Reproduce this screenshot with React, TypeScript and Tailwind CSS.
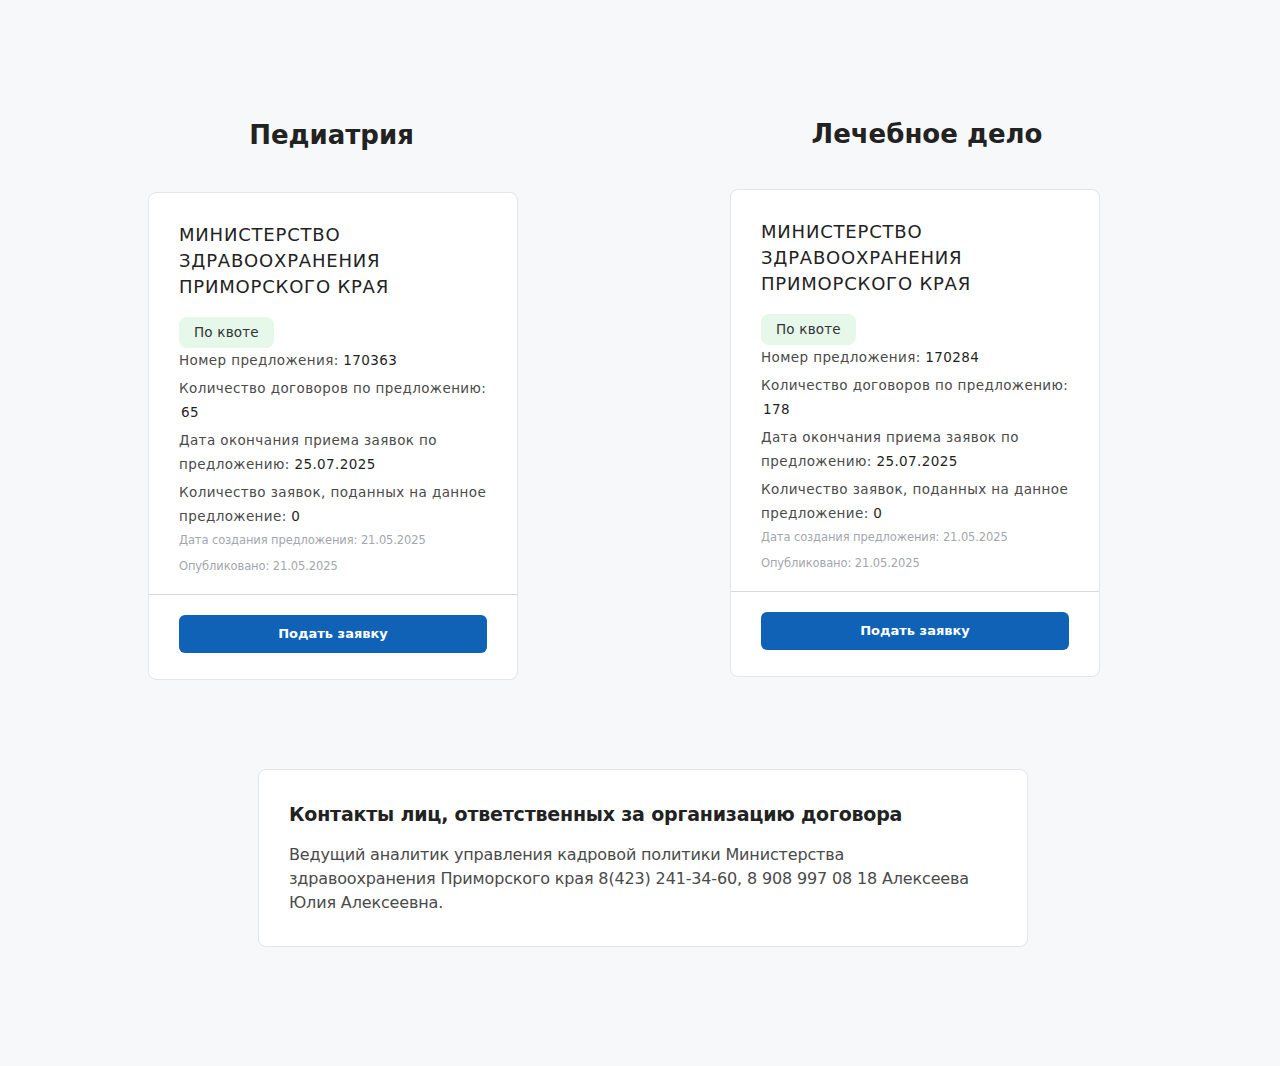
import React from "react";

type Offer = {
  title: string;
  number: string;
  contracts: string;
  deadline: string;
  applications: string;
  created: string;
  published: string;
};

const font = { fontFamily: '"DejaVu Sans", "Noto Sans", sans-serif' };

function Card({ o }: { o: Offer }) {
  return (
    <div className="w-[370px] rounded-[8px] border border-[#e3e5e8] bg-white">
      <div className="px-[30px] pt-[29px] pb-[16px]">
        <div className="text-[18px] leading-[26px] uppercase text-[#222] tracking-[0.8px]">
          {o.title}
        </div>
        <div className="mt-[17px] inline-flex h-[31px] items-center rounded-[8px] bg-[#e5f8ea] px-[15px] text-[13.5px] tracking-[0.2px] text-[#333]">
          По квоте
        </div>
        <div className="flex flex-col gap-[4px] text-[13.5px] leading-[24px] tracking-[0.4px] text-[#4a4a4a]">
          <div>
            Номер предложения: <span className="text-[#1f1f1f]">{o.number}</span>
          </div>
          <div>
            Количество договоров по предложению:
            <br />
            <span className="ml-[2px] text-[#1f1f1f]">{o.contracts}</span>
          </div>
          <div>
            Дата окончания приема заявок по предложению:{" "}
            <span className="text-[#1f1f1f]">{o.deadline}</span>
          </div>
          <div>
            Количество заявок, поданных на данное предложение:{" "}
            <span className="text-[#1f1f1f]">{o.applications}</span>
          </div>
        </div>
        <div className="text-[11.5px] leading-[24px] tracking-[-0.1px] text-[#a3a7ad]">
          Дата создания предложения: {o.created}
        </div>
        <div className="mt-[2px] text-[11.5px] leading-[24px] tracking-[-0.1px] text-[#a3a7ad]">
          Опубликовано: {o.published}
        </div>
      </div>
      <div className="border-t border-[#d7d9dc] px-[30px] pt-[20px] pb-[26px]">
        <button className="flex h-[38px] w-full items-center justify-center rounded-[6px] bg-[#0f62b6] text-[13px] font-bold text-white">
          Подать заявку
        </button>
      </div>
    </div>
  );
}

export default function App() {
  const a: Offer = {
    title: "Министерство здравоохранения Приморского края",
    number: "170363",
    contracts: "65",
    deadline: "25.07.2025",
    applications: "0",
    created: "21.05.2025",
    published: "21.05.2025",
  };
  const b: Offer = { ...a, number: "170284", contracts: "178" };
  return (
    <div className="min-h-[1066px] bg-[#f7f8fa]" style={font}>
      <div className="flex gap-[212px] pl-[148px] pt-[118px]">
        <div className="flex w-[370px] flex-col">
          <h2 className="h-[34px] pr-[3px] text-center text-[26px] font-semibold leading-[34px] text-[#222]">
            Педиатрия
          </h2>
          <div className="mt-[40px]">
            <Card o={a} />
          </div>
        </div>
        <div className="-mt-[1px] flex w-[370px] flex-col">
          <h2 className="h-[34px] pl-[24px] text-center text-[26px] font-semibold leading-[34px] text-[#222]">
            Лечебное дело
          </h2>
          <div className="mt-[38px]">
            <Card o={b} />
          </div>
        </div>
      </div>
      <div className="ml-[258px] mt-[89px] w-[770px] rounded-[8px] border border-[#e3e5e8] bg-white px-[30px] pt-[30px] pb-[31px]">
        <div className="text-[19px] font-semibold leading-[28px] tracking-[-0.2px] text-[#222]">
          Контакты лиц, ответственных за организацию договора
        </div>
        <div className="mt-[15px] max-w-[692px] text-[16px] leading-[24px] tracking-[-0.15px] text-[#4a4a4a]">
          Ведущий аналитик управления кадровой политики Министерства здравоохранения Приморского края 8(423) 241-34-60, 8 908 997 08 18 Алексеева Юлия Алексеевна.
        </div>
      </div>
    </div>
  );
}
